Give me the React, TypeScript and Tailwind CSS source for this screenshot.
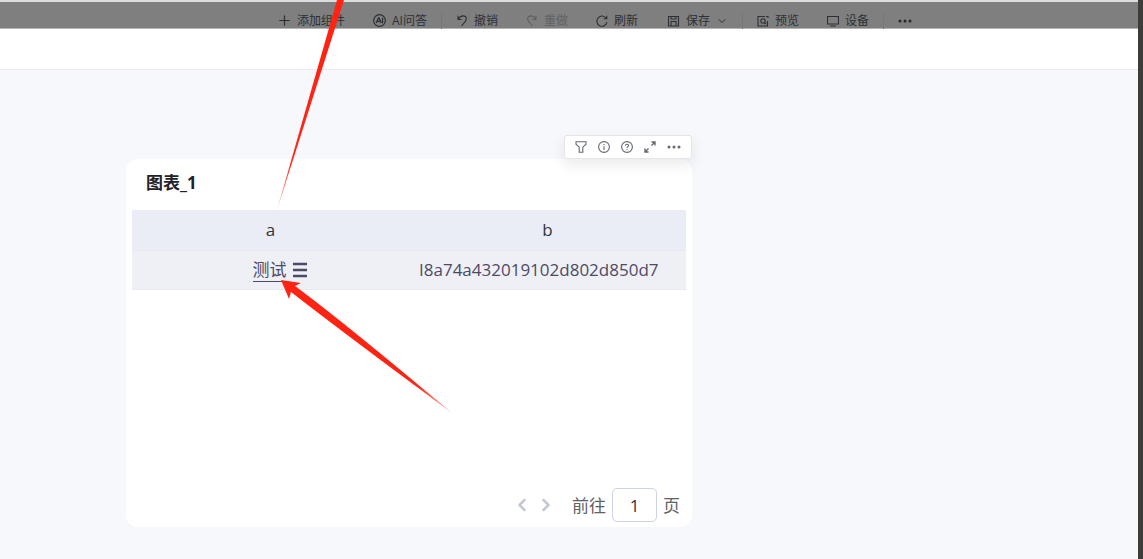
import React from 'react';
import { ChevronDown, ChevronLeft, ChevronRight, Plus } from 'lucide-react';

interface IconProps {
  className?: string;
  viewBox?: string;
  children: React.ReactNode;
}

const Icon: React.FC<IconProps> = ({ className = 'w-3 h-3', viewBox = '0 0 12 12', children }) => (
  <svg className={`shrink-0 ${className}`} viewBox={viewBox} fill="none" stroke="currentColor" strokeWidth="1.1">
    {children}
  </svg>
);

const AiIcon = () => (
  <Icon className="w-[13px] h-[13px]">
    <circle cx="6" cy="6" r="5.4" />
    <path d="M3 8.4 5 3.6h.6l2 4.8M3.8 6.8h3M8.8 3.5v5" />
  </Icon>
);

const UndoIcon = () => (
  <Icon>
    <path d="M2 .8v3.700h3.700M2.200 4.300C3.500 2 5.200.9 7 .9c2 0 3.300 1.200 3.300 2.900 0 1-.4 1.800-1 2.600L5.500 11" />
  </Icon>
);

const RedoIcon = () => (
  <Icon>
    <path d="M10 .8v3.700H6.300M9.800 4.300C8.500 2 6.800.9 5 .9 3 .9 1.700 2.100 1.700 3.800c0 1 .4 1.800 1 2.600L6.500 11" />
  </Icon>
);

const RefreshIcon = () => (
  <Icon>
    <path d="M11 7.200A5.100 5.100 0 1 1 10.200 3.200M10.800 .8v3H7.800" />
  </Icon>
);

const SaveIcon = () => (
  <Icon className="w-3.5 h-3.5" viewBox="0 0 14 14">
    <path d="M2.500 2.500h10v9.500h-10zM5 2.500v2.500h5V2.500M5 12V7.500h5V12" />
  </Icon>
);

const PreviewIcon = () => (
  <Icon>
    <path d="M8 1.500H1v9.500h9.500V6M9 1.500h2v1.500" />
    <circle cx="6" cy="6" r="2.200" />
    <path d="m7.500 7.500 1.500 1.500" />
  </Icon>
);

const DeviceIcon = () => (
  <Icon>
    <path d="M.5 1.500h11v7.500H.5zM3 11h6" />
  </Icon>
);

const DotsIcon = ({ className }: { className: string }) => (
  <svg className={className} viewBox="0 0 14 4" fill="currentColor">
    <circle cx="2" cy="2" r="1.500" />
    <circle cx="7" cy="2" r="1.500" />
    <circle cx="12" cy="2" r="1.500" />
  </svg>
);

interface ToolProps {
  icon: React.ReactNode;
  label: string;
  disabled?: boolean;
  menu?: boolean;
}

const Tool: React.FC<ToolProps> = ({ icon, label, disabled, menu }) => (
  <button
    disabled={disabled}
    className={`flex items-center gap-1.5 px-3.5 h-full whitespace-nowrap ${disabled ? 'text-[#5f6162]' : 'text-[#2c3034]'}`}
  >
    {icon}
    <span>{label}</span>
    {menu && <ChevronDown className="w-3 h-3" strokeWidth={2} />}
  </button>
);

const Separator = () => <div className="w-px h-4 bg-[#777777]" />;

const TopBar = () => (
  <header className="h-[29px] pt-[11px] pl-[264px] flex items-center bg-[#7f7f7f] border-t-2 border-t-[#dcdddd] border-b border-b-[#b4b4b4] text-xs">
    <Tool icon={<Plus className="w-[13px] h-[13px] scale-125" strokeWidth={1.8} />} label="添加组件" />
    <Tool icon={<AiIcon />} label="AI问答" />
    <Separator />
    <Tool icon={<UndoIcon />} label="撤销" />
    <Tool icon={<RedoIcon />} label="重做" disabled />
    <Tool icon={<RefreshIcon />} label="刷新" />
    <Tool icon={<SaveIcon />} label="保存" menu />
    <Separator />
    <Tool icon={<PreviewIcon />} label="预览" />
    <Tool icon={<DeviceIcon />} label="设备" />
    <Separator />
    <button aria-label="更多" className="px-3.5 text-[#24282c]">
      <DotsIcon className="w-3.5 h-1" />
    </button>
  </header>
);

const ChartToolbar = () => (
  <div className="relative z-10 self-end h-6 px-2.5 flex items-center gap-[11px] bg-white border border-[#e3e5ea] rounded-[3px] shadow-[0_6px_14px_rgba(31,35,41,0.09)] text-[#646a73]">
    <button aria-label="筛选">
      <Icon>
        <path d="M1 .8h10v2.400L7.800 6.200v5H4.200v-5L1 3.200z" />
      </Icon>
    </button>
    <button aria-label="信息">
      <Icon>
        <circle cx="6" cy="6" r="5.400" />
        <path d="M6 5.200v3.800M6 3v1.200" />
      </Icon>
    </button>
    <button aria-label="帮助">
      <Icon>
        <circle cx="6" cy="6" r="5.400" />
        <path d="M4.400 4.800C4.400 3.700 5.100 3.200 6 3.200s1.600.6 1.600 1.400C7.600 5.600 6 5.800 6 7M6 8v1" />
      </Icon>
    </button>
    <button aria-label="全屏">
      <Icon>
        <path d="M7.500 1h3.500v3.500M11 1 7.500 4.500M1 7.500v3.500h3.500M1 11l3.500-3.500" strokeWidth="1.400" />
      </Icon>
    </button>
    <button aria-label="更多">
      <DotsIcon className="w-3.5 h-1" />
    </button>
  </div>
);

const ChartTable = () => (
  <table className="w-full table-fixed border-collapse text-[17px] leading-6 text-[#4c4a66]">
    <thead>
      <tr className="h-10 bg-[#eaedf6] text-[#33353c]">
        <th className="p-0 font-normal">a</th>
        <th className="p-0 font-normal">b</th>
      </tr>
    </thead>
    <tbody>
      <tr className="h-[39px] bg-[#eff0f5] border-y border-[#e8eaf0]">
        <td className="p-0 pl-[18px]">
          <div className="flex items-center justify-center gap-1.5">
            <a href="#detail" className="leading-[22px] pt-0.5 border-b border-[#4c4a66]">测试</a>
            <svg className="w-3.5 h-4" viewBox="0 0 14 16" fill="none" stroke="currentColor" strokeWidth="2.500">
              <path d="M0 2h14M0 8h14M0 14h14" />
            </svg>
          </div>
        </td>
        <td className="py-0 pl-2.5 pr-[26px]">
          <div className="overflow-hidden whitespace-nowrap">I8a74a432019102d802d850d7</div>
        </td>
      </tr>
    </tbody>
  </table>
);

const Pagination = () => (
  <div className="flex items-center justify-end px-1.5 text-[17px] text-[#606266]">
    <button aria-label="上一页" disabled className="text-[#c4c8d2]">
      <ChevronLeft className="w-6 h-5" strokeWidth={3} />
    </button>
    <button aria-label="下一页" disabled className="text-[#c4c8d2]">
      <ChevronRight className="w-6 h-5" strokeWidth={3} />
    </button>
    <label className="ml-3.5 flex items-center gap-1.5">
      <span className="pt-0.5">前往</span>
      <input
        type="text"
        defaultValue="1"
        className="w-[45px] h-[34px] rounded-[5px] border border-[#cdd3e6] bg-white text-center text-[#33353c]"
      />
      <span className="pt-0.5">页</span>
    </label>
  </div>
);

const Arrows = () => (
  <svg className="absolute top-0 left-0 z-20 pointer-events-none" width="460" height="420" viewBox="0 0 460 420">
    <defs>
      <linearGradient id="fadeUp" gradientUnits="userSpaceOnUse" x1="277" y1="210" x2="292" y2="160">
        <stop offset="0" stopColor="#ff2314" stopOpacity="0.4" />
        <stop offset="1" stopColor="#ff2314" />
      </linearGradient>
      <linearGradient id="fadeDown" gradientUnits="userSpaceOnUse" x1="452" y1="413" x2="415" y2="383">
        <stop offset="0" stopColor="#ff2314" stopOpacity="0.4" />
        <stop offset="1" stopColor="#ff2314" />
      </linearGradient>
    </defs>
    <path d="M277 210 337 0h7z" fill="url(#fadeUp)" />
    <path d="M281 280 301 283 295 286Q345 323 452 413 345 334 291 292L289 299z" fill="url(#fadeDown)" />
  </svg>
);

const App: React.FC = () => (
  <div className="relative min-h-screen flex overflow-hidden bg-[#f6f8fc] font-['Open_Sans','Noto_Sans_CJK_SC',sans-serif]">
    <div className="flex-1 min-w-0">
      <TopBar />
      <div className="h-[41px] bg-white border-b border-[#e8eaef]" />
      <main className="pt-[65px] pl-[126px] pr-6 pb-8">
        <section className="w-full max-w-[566px] flex flex-col">
          <ChartToolbar />
          <div className="min-h-[368px] flex flex-col bg-white rounded-xl px-1.5 pb-[5px]">
            <h2 className="px-3.5 pt-3 pb-[15px] text-[17px] leading-6 font-bold text-[#1f2329]">图表_1</h2>
            <ChartTable />
            <div className="mt-auto">
              <Pagination />
            </div>
          </div>
        </section>
      </main>
    </div>
    <div className="w-[5px] bg-[#3c3c3b]" />
    <Arrows />
  </div>
);

export default App;
